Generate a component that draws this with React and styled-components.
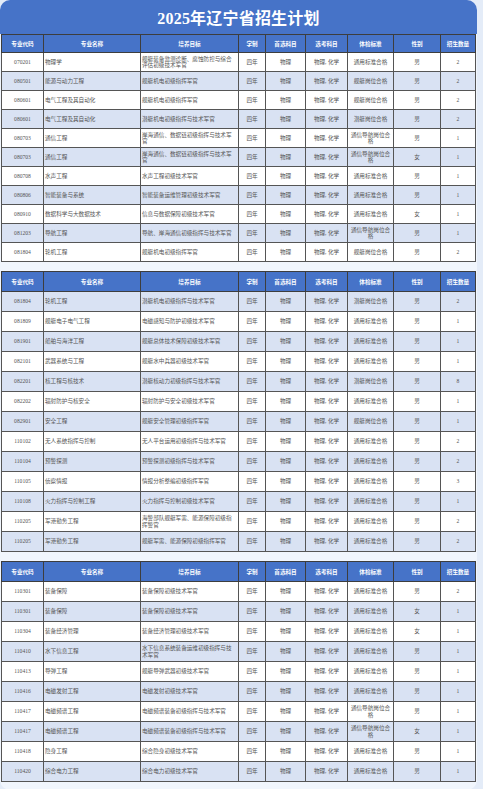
import styled, { createGlobalStyle } from 'styled-components';

const COLS = [42, 97, 98, 27, 40, 42, 46, 47, 35];
const HEADERS = ['专业代码', '专业名称', '培养目标', '学制', '首选科目', '选考科目', '体检标准', '性别', '招生数量'];

// [code, name, goal, standard, gender, count] — 学制/首选/选考 are the same for every row
const TABLE_ONE = [
  ['070201', '物理学', '舰艇装备监测诊断、腐蚀防控与综合评估初级技术军官', '通用标准合格', '男', 2],
  ['080501', '能源与动力工程', '舰艇机电初级指挥军官', '舰艇岗位合格', '男', 2],
  ['080601', '电气工程及其自动化', '舰艇机电初级指挥军官', '舰艇岗位合格', '男', 2],
  ['080601', '电气工程及其自动化', '潜艇机电初级指挥与技术军官', '潜艇岗位合格', '男', 2],
  ['080703', '通信工程', '岸海通信、数据链初级指挥与技术军官', '通信导航岗位合格', '男', 1],
  ['080703', '通信工程', '岸海通信、数据链初级指挥与技术军官', '通信导航岗位合格', '女', 1],
  ['080708', '水声工程', '水声工程初级技术军官', '通用标准合格', '男', 1],
  ['080806', '智能装备与系统', '智能装备运维管理初级技术军官', '通用标准合格', '男', 1],
  ['080910', '数据科学与大数据技术', '信息与数据保障初级技术军官', '通用标准合格', '女', 1],
  ['081203', '导航工程', '导航、岸海通信初级指挥与技术军官', '通信导航岗位合格', '男', 1],
  ['081804', '轮机工程', '舰艇机电初级指挥军官', '舰艇岗位合格', '男', 2],
];

const TABLE_TWO = [
  ['081804', '轮机工程', '潜艇机电初级指挥与技术军官', '潜艇岗位合格', '男', 2],
  ['081809', '舰艇电子电气工程', '电磁感知与防护初级技术军官', '通用标准合格', '男', 1],
  ['081901', '船舶与海洋工程', '舰艇总体技术保障初级技术军官', '通用标准合格', '男', 1],
  ['082101', '武器系统与工程', '舰艇水中兵器初级技术军官', '通用标准合格', '男', 1],
  ['082201', '核工程与核技术', '潜艇核动力初级指挥与技术军官', '潜艇岗位合格', '男', 8],
  ['082202', '辐射防护与核安全', '辐射防护与安全初级技术军官', '通用标准合格', '男', 1],
  ['082901', '安全工程', '舰艇安全管理初级指挥军官', '舰艇岗位合格', '男', 1],
  ['110102', '无人系统指挥与控制', '无人平台运用初级指挥与技术军官', '通用标准合格', '男', 2],
  ['110104', '预警探测', '预警探测初级指挥与技术军官', '通用标准合格', '男', 2],
  ['110105', '侦察情报', '情报分析整编初级指挥军官', '通用标准合格', '男', 3],
  ['110108', '火力指挥与控制工程', '火力指挥与控制初级技术军官', '通用标准合格', '男', 1],
  ['110205', '军港勤务工程', '海警部队舰艇军需、能源保障初级指挥警官', '通用标准合格', '男', 2],
  ['110205', '军港勤务工程', '舰艇军需、能源保障初级指挥军官', '通用标准合格', '男', 2],
];

const TABLE_THREE = [
  ['110301', '装备保障', '装备保障初级技术军官', '通用标准合格', '男', 2],
  ['110301', '装备保障', '装备保障初级技术军官', '通用标准合格', '女', 1],
  ['110304', '装备经济管理', '装备经济管理初级技术军官', '通用标准合格', '女', 1],
  ['110410', '水下信息工程', '水下信息系统装备运维初级指挥与技术军官', '通用标准合格', '男', 1],
  ['110413', '导弹工程', '舰艇导弹武器初级技术军官', '通用标准合格', '男', 1],
  ['110416', '电磁发射工程', '电磁发射初级技术军官', '通用标准合格', '男', 1],
  ['110417', '电磁频谱工程', '电磁频谱装备初级指挥与技术军官', '通信导航岗位合格', '男', 1],
  ['110417', '电磁频谱工程', '电磁频谱装备初级指挥与技术军官', '通信导航岗位合格', '女', 1],
  ['110418', '隐身工程', '综合隐身初级技术军官', '通用标准合格', '男', 1],
  ['110420', '综合电力工程', '综合电力初级技术军官', '通用标准合格', '男', 1],
];

function PlanTable({ rows, headH, rowH, startShaded }) {
  return (
    <Table>
      <colgroup>
        {COLS.map((w, i) => <col key={i} style={{ width: w }} />)}
      </colgroup>
      <thead>
        <tr style={{ height: headH }}>
          {HEADERS.map(h => <Th key={h}>{h}</Th>)}
        </tr>
      </thead>
      <tbody>
        {rows.map(([code, name, goal, standard, gender, count], i) => (
          <Row key={i} $shaded={(i % 2 === 0) === startShaded} style={{ height: rowH }}>
            <Td>{code}</Td>
            <Td $left>{name}</Td>
            <Td $left>{goal}</Td>
            <Td>四年</Td>
            <Td>物理</Td>
            <Td>物理, 化学</Td>
            <Td>{standard}</Td>
            <Td>{gender}</Td>
            <Td>{count}</Td>
          </Row>
        ))}
      </tbody>
    </Table>
  );
}

export default function App() {
  return (
    <>
      <GlobalStyle />
      <Card>
        <Title>2025年辽宁省招生计划</Title>
        <Tables>
          <PlanTable rows={TABLE_ONE} headH={18} rowH={19} startShaded={false} />
          <PlanTable rows={TABLE_TWO} headH={20} rowH={20} startShaded={true} />
          <PlanTable rows={TABLE_THREE} headH={20} rowH={20} startShaded={false} />
        </Tables>
      </Card>
    </>
  );
}

const GlobalStyle = createGlobalStyle`
  body {
    margin: 0;
    background: #e4ecf8;
  }
`;

const Card = styled.div`
  width: 477px;
  box-sizing: border-box;
  padding: 0 2px 8px 1px;
  background: #f1f6fd;
  border-radius: 10px;
  overflow: hidden;
`;

const Title = styled.div`
  height: 34px;
  margin: 0 -2px 0 -1px;
  display: flex;
  align-items: center;
  justify-content: center;
  background: #4673c8;
  color: #fff;
  font-family: "Liberation Serif", "Noto Sans CJK SC", serif;
  font-weight: bold;
  font-size: 16px;
  letter-spacing: 0.2px;
`;

const Tables = styled.div`
  display: flex;
  flex-direction: column;
  gap: 9px;
`;

const Table = styled.table`
  width: 474px;
  table-layout: fixed;
  border-collapse: collapse;
  border: 1px solid #3d3d3d;
`;

const Th = styled.th`
  background: #4673c8;
  color: #fff;
  font-family: "Noto Sans CJK SC", sans-serif;
  font-weight: bold;
  font-size: 5.6px;
  border: 1px solid #3d3d3d;
  padding: 0;
  text-align: center;
`;

const Row = styled.tr`
  background: ${p => (p.$shaded ? '#d9e2f3' : '#ffffff')};
`;

const Td = styled.td`
  border: 1px solid #555;
  padding: 0 ${p => (p.$left ? '1px' : '2px')};
  font-family: "Liberation Serif", "Noto Sans CJK SC", serif;
  font-size: 5.6px;
  line-height: 1.15;
  color: #555;
  text-align: ${p => (p.$left ? 'left' : 'center')};
  vertical-align: middle;
  word-break: break-all;
`;
